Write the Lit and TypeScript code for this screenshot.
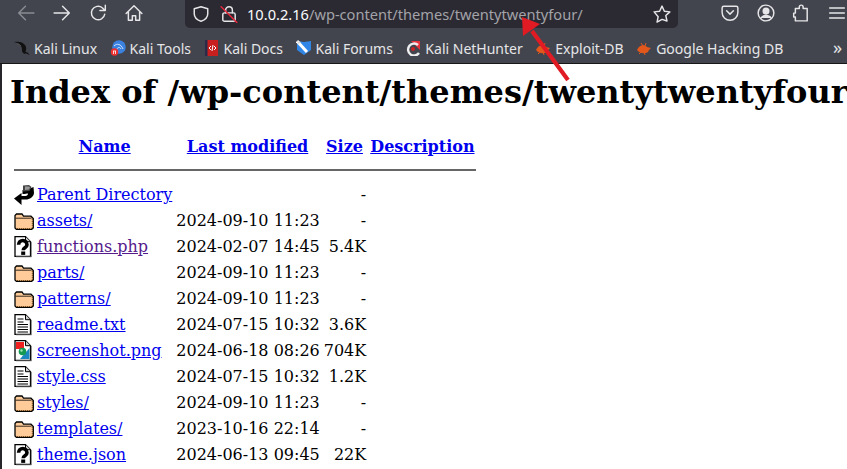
import { LitElement, html, css, svg } from "lit";
import { customElement } from "lit/decorators.js";

const page = svg`<path d="M1 .7H11.500L16.500 5.700V20.300H1z" fill="#fff" stroke="#000" stroke-width="1.300"/><path d="M11.500 .7V5.700h5" fill="#ccc" stroke="#000"/><path d="M2 20.800h15.500M17.400 6v15" stroke="#777" stroke-width=".8"/>`;
const ic = {
  folder: svg`<path d="M1 5V2.500L2.500 1H8l1.500 2.200H17L19.300 5.500V15L17.500 16.500H2.500L1 15z" fill="#ffcc99" stroke="#000" stroke-width="1.300"/><path d="M1.500 5.200H17.500" stroke="#000" stroke-width=".8"/><path d="M18.300 6v9M3 15.500h15" stroke="#7a4a10" stroke-width="1" stroke-dasharray="1 1" fill="none"/>`,
  unk: svg`${page}<path d="M4.600 8.800c0-5.800 8.400-5.800 8.400 0 0 3.200-3.800 2.800-3.800 5.500" fill="none" stroke="#000" stroke-width="3.600"/><rect x="7.200" y="15.500" width="4" height="3.400" fill="#000"/>`,
  text: svg`${page}<path d="M3.500 5h6M3.500 8h6M3.500 10.500h10.500M3.500 13h10.500M3.500 15.500h10.500M3.500 18h10.500" stroke="#000" stroke-width="1.200"/>`,
  image: svg`${page}<rect x="2" y="2" width="8" height="7" fill="#f02020"/><path d="M15.500 8v11H6z" fill="#1c86c0"/><circle cx="8.500" cy="11.500" r="3.800" fill="#149a50"/><circle cx="7.500" cy="10.500" r="1.200" fill="#9fe0b0"/>`,
  back: svg`<path d="M8.500 6h4l7-3 .5 6c-.5 4-4 6.500-8.500 6.500H7.500V21L0 14.500 7.500 9v3h4c1.500 0 2.500-1 2.500-2.500-1 0-3 .5-5.500.5z" fill="#000"/><path d="M9 1.500l6-.5 2.500 2-2 4-6.500.5z" fill="#444"/><path d="M11 2.500l4 0 1 1-1 2-4 .5z" fill="#999"/>`,
};
const dim: Record<string, [number, number]> = {
  folder: [20, 17], unk: [18, 22], text: [18, 22], image: [18, 22], back: [20, 22],
};

type Row = [keyof typeof ic, string, string, string, boolean?];
const rows: Row[] = [
  ["folder", "assets/", "2024-09-10 11:23", "-"],
  ["unk", "functions.php", "2024-02-07 14:45", "5.4K", true],
  ["folder", "parts/", "2024-09-10 11:23", "-"],
  ["folder", "patterns/", "2024-09-10 11:23", "-"],
  ["text", "readme.txt", "2024-07-15 10:32", "3.6K"],
  ["image", "screenshot.png", "2024-06-18 08:26", "704K"],
  ["text", "style.css", "2024-07-15 10:32", "1.2K"],
  ["folder", "styles/", "2024-09-10 11:23", "-"],
  ["folder", "templates/", "2023-10-16 22:14", "-"],
  ["unk", "theme.json", "2024-06-13 09:45", "22K"],
];

const S = "#e6e6e8";
const tb = (body: unknown) => html`<svg class="tbi" viewBox="0 0 16 16" fill="none" stroke="${S}" stroke-width="1.300" stroke-linecap="round" stroke-linejoin="round">${body}</svg>`;
const icon = (k: keyof typeof ic) => {
  const [w, h] = dim[k];
  return html`<svg style="width:${w}px;height:${h}px" viewBox="0 0 ${w} ${h}">${ic[k]}</svg>`;
};

const bug = svg`<path d="M1 10c2-5 7-6 10-3l4 1-2 2-1 2c-3 2-8 2-11-2z" fill="#e2571c"/><path d="M5 3l2 3M10 3L9 6M3 14l2-2M9 15l-1-3" stroke="#e2571c" stroke-width="1"/>`;
const marks = [
  svg`<path d="M0 2c5-1 9 0 11 3 2 3 1 5 .500 7 2 0 3 1 4 3-2-1-4-2-5-1-2-1-3-3-2.500-5C8 6 5 3 0 2z" fill="#111"/><path d="M3 4c2 0 3 1 4 2" stroke="#555" fill="none"/>`,
  svg`<circle cx="9" cy="7" r="6.800" fill="#3b82e0"/><path d="M4 6c3-3 7-2 9 3M7 9c1-2 3-2 4 0" stroke="#cfe4ff" fill="none"/><circle cx="4.500" cy="12" r="3.700" fill="#ef3030"/><path d="M3 11h3M3.500 11v3M5.500 11v3" stroke="#fff" stroke-width=".8"/>`,
  svg`<rect x="2" y="0" width="12" height="16" fill="#c81f1f"/><rect x="1" y="0" width="2.500" height="16" fill="#2a2a4a"/><path d="M7 6L5 8l2 2M10 6l2 2-2 2M9 5L8 11" stroke="#fff" stroke-width="1" fill="none"/>`,
  svg`<path d="M1 1l7 1 7-1v9l-7 5-7-5z" fill="#2f86e6"/><path d="M1 1l10 11" stroke="#fff" stroke-width="3"/><path d="M1 1l4 1-3 3z" fill="#ddd"/>`,
  svg`<path d="M6 1h9v9z" fill="#e8323c"/><path d="M13 5a6 6 0 1 0 1 8" fill="none" stroke="#eee" stroke-width="2.400"/><circle cx="8" cy="9" r="2" fill="#c22"/>`,
  bug,
  bug,
];
const bms: [string, number][] = [["Kali Linux", 0], ["Kali Tools", 1], ["Kali Docs", 2], ["Kali Forums", 3], ["Kali NetHunter", 4], ["Exploit-DB", 5], ["Google Hacking DB", 6]];

@customElement("app-root")
export class AppRoot extends LitElement {
  static styles = css`
    :host { display: block; width: 847px; height: 469px; overflow: hidden; position: relative; background: #fff; font-family: "Noto Sans", "Open Sans", sans-serif; }
    .toolbar { height: 36px; background: #42454e; display: flex; align-items: flex-start; padding-left: 17px; box-sizing: border-box; }
    .nav { display: flex; align-items: center; gap: 18px; height: 26px; }
    .tbi { display: block; flex: none; width: 18px; height: 18px; }
    .urlbar { margin-left: 42px; width: 493px; height: 28px; background: #2b2a33; border-radius: 0 0 5px 5px; display: flex; align-items: center; padding: 0 7px; box-sizing: border-box; color: #fbfbfe; font-size: 14.630px; flex: none; }
    .shield { margin-right: 10px; }
    .lock { margin-right: 9px; }
    .url { flex: 1; white-space: nowrap; }
    .url span { color: #a3a3a8; }
    .right { display: flex; align-items: center; gap: 17.500px; height: 26px; margin-left: 43px; }
    .bookmarks { height: 27px; padding-bottom: 3px; background: #42454e; display: flex; align-items: center; padding-left: 14px; color: #e6e6e8; font-size: 14px; position: relative; box-sizing: border-box; white-space: nowrap; }
    .bm { display: flex; align-items: center; gap: 4px; margin-right: 12.500px; }
    .bm svg { width: 16px; height: 16px; flex: none; }
    .more { position: absolute; left: 833px; top: -1px; font-size: 18px; }
    .line { height: 1px; background: #17171a; }
    .page { border-left: 2px solid #26262b; height: 405px; box-sizing: border-box; font-family: "DejaVu Serif", serif; font-size: 16px; color: #000; padding-left: 8px; overflow: hidden; }
    h1 { margin: 0; font-size: 32px; line-height: 38px; padding-top: 9px; white-space: nowrap; font-weight: bold; }
    table { border-collapse: separate; border-spacing: 2px; margin: 22px 0 0 2px; }
    th, td { padding: 1px; height: 22px; line-height: 22px; white-space: nowrap; }
    th { text-align: center; }
    a { color: #0000ee; text-decoration: underline; }
    a.v { color: #551a8b; }
    td.size { text-align: right; padding-left: 2px; }
    td.rule { padding: 0; height: auto; line-height: 0; }
    .hr { height: 2px; background: #666; margin: 8px 0 10px; }
    td.icon { padding: 0; width: 20px; line-height: 0; }
    td.icon svg { display: block; }
    td.mod { padding-left: 1px; padding-right: 0; }
    .arrow { position: absolute; left: 515px; top: 10px; width: 60px; height: 75px; }
  `;

  render() {
    return html`
      <div class="toolbar">
        <div class="nav">
          ${tb(svg`<path d="M15 8H1.500M7.500 2L1.500 8l6 6" stroke="#8a8c92"/>`)}
          ${tb(svg`<path d="M1 8H14.500M8.500 2L14.500 8l-6 6"/>`)}
          ${tb(svg`<path d="M14 9a6 6 0 1 1-2-5.500L14 5.500M14.500 1v4.800H9.700"/>`)}
          ${tb(svg`<path d="M1 8.500L8 1.500l7 7M3 7v7.500h3.500v-4h3v4H13V7"/>`)}
        </div>
        <div class="urlbar">
          <span class="shield">${tb(svg`<path d="M8 1.500l6 1.800v4.500c0 3.500-3 5.700-6 6.700-3-1-6-3.200-6-6.700V3.300z"/>`)}</span>
          <span class="lock">${tb(svg`<rect x="2.500" y="7" width="11" height="7.500" rx="1.500"/><path d="M5 7V4.500a3 3 0 0 1 6 0V7"/><path d="M1 1.500l14 14" stroke="#e8263c"/>`)}</span>
          <div class="url">10.0.2.16<span>/wp-content/themes/twentytwentyfour/</span></div>
          ${tb(svg`<path d="M8 1l2.100 4.500 4.900.6-3.600 3.300 1 4.800L8 12.800l-4.400 2.400 1-4.800L1 6.100l4.900-.6z"/>`)}
        </div>
        <div class="right">
          ${tb(svg`<path d="M2.500 2h11A1.500 1.500 0 0 1 15 3.500v4a7 7 0 0 1-14 0v-4A1.500 1.500 0 0 1 2.500 2zM5 6l3 3 3-3"/>`)}
          ${tb(svg`<circle cx="8" cy="8" r="7"/><circle cx="8" cy="6.300" r="2.500" fill="${S}"/><path d="M3.500 12.500c2-3 7-3 9 0" fill="${S}"/>`)}
          ${tb(svg`<path d="M6.500 4V2.700a1.700 1.700 0 0 1 3.400 0V4H13.500v11H3v-3.500H1.500v-3.400H3V4z"/>`)}
          ${tb(svg`<path d="M1.500 3.500h13M1.500 8h13M1.500 12.500h13"/>`)}
        </div>
      </div>
      <div class="bookmarks">
        ${bms.map(([n, i]) => html`<div class="bm"><svg viewBox="0 0 16 16">${marks[i]}</svg>${n}</div>`)}
        <div class="more">»</div>
      </div>
      <div class="line"></div>
      <div class="page">
        <h1>Index of /wp-content/themes/twentytwentyfour</h1>
        <table>
          <tr><th></th><th><a href="#">Name</a></th><th><a href="#">Last modified</a></th><th><a href="#">Size</a></th><th><a href="#">Description</a></th></tr>
          <tr><td class="rule" colspan="5"><div class="hr"></div></td></tr>
          <tr><td class="icon">${icon("back")}</td><td><a href="#">Parent Directory</a></td><td class="mod"></td><td class="size">-</td><td></td></tr>
          ${rows.map(([i, n, d, s, v]) => html`<tr><td class="icon">${icon(i)}</td><td><a href="#" class=${v ? "v" : ""}>${n}</a></td><td class="mod">${d}</td><td class="size">${s}</td><td></td></tr>`)}
        </table>
      </div>
      <svg class="arrow" viewBox="0 0 60 75"><path d="M53 70L17 21" stroke="#e01b24" stroke-width="4.200"/><path d="M7 7l18 7-17 12z" fill="#e01b24"/></svg>
    `;
  }
}
